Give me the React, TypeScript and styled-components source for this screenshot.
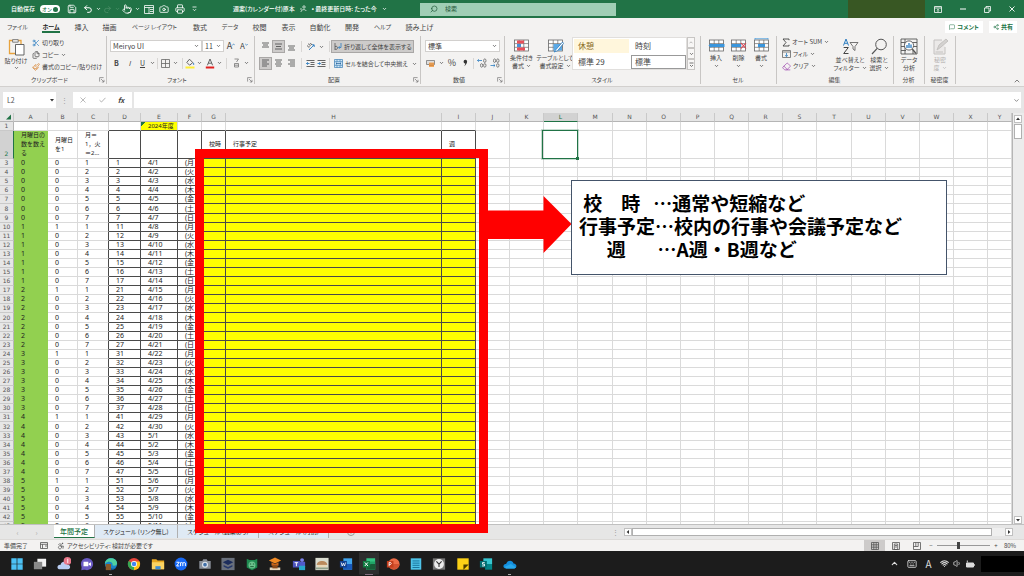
import React from "react";
import styled, { createGlobalStyle, css } from "styled-components";
import { Undo2, Redo2, Save, Camera, Printer, Search, Pointer, Scissors, Files, Paintbrush, Eraser, Wifi, Volume1, Accessibility, MessageSquare, Share2, ChevronUp, ChevronDown, Keyboard } from "lucide-react";

const Global = createGlobalStyle`
  * { box-sizing: border-box; }
  body {
    margin: 0;
    background: #e6e6e6;
    color: #444;
    font-family: "Noto Sans CJK JP", "Liberation Sans", sans-serif;
    font-size: 7px;
    line-height: 8px;
  }
  button, input, select { font: inherit; color: inherit; margin: 0; padding: 0; border: 0; background: none; outline: none; }
  button { display: inline-flex; align-items: center; justify-content: center; white-space: nowrap; }
  svg { display: block; flex: none; }
`;

/* ---------- shared parts ---------- */
const Page = styled.div`
  display: flex;
  flex-direction: column;
  height: 100vh;
  overflow: hidden;
`;

const Spacer = styled.div`
  flex: 1;
`;

const Caret = ({ c = "#555" }: { c?: string }) => (
  <svg width="5" height="4" viewBox="0 0 5 4">
    <path d="M1 1.1 L2.5 2.6 L4 1.1" fill="none" stroke={c} strokeWidth="0.8" />
  </svg>
);

/* ---------- title bar ---------- */
const TitleBar = styled.header`
  display: flex;
  align-items: center;
  height: 18px;
  flex: none;
  background: #217346;
  color: #fff;
`;

const AutoSave = styled.label`
  display: flex;
  align-items: center;
  gap: 5px;
  padding-left: 11px;
  font-size: 6px;
  font-weight: 500;
  width: 63px;
  white-space: nowrap;
`;

const Toggle = styled.input`
  appearance: none;
  display: flex;
  align-items: center;
  justify-content: space-between;
  width: 20px;
  height: 8px;
  padding: 0 2px;
  border-radius: 4px;
  background: #fff;
  color: #217346;
  font-size: 5px;
  &::before { content: "オン"; }
  &::after { content: ""; width: 5px; height: 5px; border-radius: 50%; background: #217346; }
`;

const Slot = styled.button<{ $w: number; $h?: number; $on?: boolean; $size?: number; $end?: boolean }>`
  width: ${(p) => p.$w}px;
  height: ${(p) => p.$h ?? 12}px;
  flex: none;
  ${(p) => p.$size && css`font-size: ${p.$size}px;`}
  ${(p) => p.$end && css`align-self: flex-end;`}
  ${(p) => p.$on && css`background: #cdcbca; border: 1px solid #a9a7a6;`}
`;

const DocTitle = styled.div`
  display: flex;
  align-items: center;
  gap: 5px;
  margin-left: 31px;
  width: 187px;
  font-size: 6px;
  font-weight: 500;
  white-space: nowrap;
  font-feature-settings: "palt";
`;

const SearchBox = styled.label`
  display: flex;
  align-items: center;
  gap: 7px;
  width: 196px;
  height: 13px;
  padding-left: 10px;
  background: #a0ceb5;
  color: #1d5535;
  font-size: 6px;
  input { flex: 1; min-width: 0; }
  input::placeholder { color: #1d5535; opacity: 1; }
`;

const NamePlate = styled.div`
  width: 77px;
  height: 18px;
  background: #385723;
`;

/* ---------- ribbon tabs ---------- */
const TabRow = styled.nav`
  display: flex;
  align-items: center;
  height: 18px;
  flex: none;
  padding: 0 7px 0 1px;
  background: #f3f2f1;
`;

const RibbonTab = styled.a<{ $w: number; $active?: boolean; $kana?: boolean }>`
  display: flex;
  align-items: center;
  justify-content: center;
  width: ${(p) => p.$w}px;
  height: 16px;
  color: #444;
  font-size: ${(p) => (p.$kana ? 6 : 7)}px;
  font-feature-settings: "palt";
  text-decoration: none;
  white-space: nowrap;
  ${(p) => p.$active && css`
    color: #222;
    font-weight: 700;
    span { border-bottom: 2px solid #217346; padding-top: 2px; }
  `}
`;

const ShareButton = styled.button`
  gap: 2px;
  height: 12px;
  padding: 0 4px;
  margin-left: 6px;
  background: #fff;
  color: #217346;
  font-size: 6px;
  font-weight: 700;
  font-feature-settings: "palt";
`;

/* ---------- ribbon ---------- */
const Ribbon = styled.section`
  display: flex;
  height: 51px;
  flex: none;
  background: #f3f2f1;
  border-bottom: 1px solid #d2d0ce;
`;

const Group = styled.div<{ $w: number }>`
  display: flex;
  flex-direction: column;
  width: ${(p) => p.$w}px;
  flex: none;
  height: 48px;
  border-right: 1px solid #c8c6c4;
`;

const GroupBody = styled.div<{ $pad?: number }>`
  display: flex;
  flex: 1;
  min-height: 0;
  padding-left: ${(p) => p.$pad ?? 0}px;
`;

const GroupLabel = styled.div`
  display: flex;
  align-items: center;
  justify-content: center;
  height: 8px;
  padding-right: 1px;
  font-size: 6px;
  font-feature-settings: "palt";
  span { flex: 1; text-align: center; }
`;

const Column = styled.div<{ $gap?: number; $pad?: number }>`
  display: flex;
  flex-direction: column;
  gap: ${(p) => p.$gap ?? 0}px;
  padding-top: ${(p) => p.$pad ?? 0}px;
`;

const Row = styled.div`
  display: flex;
  align-items: center;
`;

const BigButton = styled.button<{ $w: number; $dim?: boolean }>`
  flex-direction: column;
  justify-content: flex-start;
  width: ${(p) => p.$w}px;
  height: 36px;
  padding-top: 2px;
  font-size: 6px;
  font-feature-settings: "palt";
  color: ${(p) => (p.$dim ? "#b5b3b1" : "#444")};
  svg:first-child { margin-bottom: 1px; }
`;

const CaptionRow = styled.span`
  display: flex;
  align-items: center;
  gap: 2px;
  height: 8px;
`;

const LineButton = styled.button`
  justify-content: flex-start;
  gap: 2px;
  height: 12px;
  font-size: 6px;
  font-feature-settings: "palt";
`;

const Picker = styled.div<{ $w: number }>`
  display: flex;
  align-items: center;
  width: ${(p) => p.$w}px;
  height: 12px;
  padding: 0 2px;
  background: #fff;
  border: 1px solid #d2d0ce;
  select { appearance: none; flex: 1; min-width: 0; }
`;

const Divider = styled.i<{ $m?: number }>`
  width: 1px;
  height: 11px;
  margin: 0 ${(p) => p.$m ?? 2}px;
  background: #d8d6d4;
`;

const TextButton = styled.button<{ $on?: boolean }>`
  gap: 2px;
  width: 83px;
  height: 13px;
  padding: 0 2px;
  justify-content: flex-start;
  font-size: 6px;
  font-feature-settings: "palt";
  border: 1px solid transparent;
  ${(p) => p.$on && css`background: #cdcbca; border-color: #a9a7a6;`}
`;

const Gallery = styled.div`
  display: grid;
  grid-template-columns: 57px 57px;
  grid-template-rows: 16px 16px;
  width: 115px;
  height: 33px;
  margin-top: 1px;
  background: #fff;
  border: 1px solid #e1dfdd;
`;

const StyleCell = styled.button<{ $tint?: boolean; $on?: boolean }>`
  justify-content: flex-start;
  padding-left: 4px;
  margin: 1px;
  font-size: 8px;
  ${(p) => p.$tint && css`background: #fff6dc; color: #8a6d1f;`}
  ${(p) => p.$on && css`border: 1px solid #999; padding-left: 3px;`}
`;

const GalleryScroll = styled.div`
  display: flex;
  flex-direction: column;
  width: 8px;
  height: 33px;
  margin-top: 1px;
  button { flex: 1; border: 1px solid #c8c6c4; background: #f8f7f6; }
`;

/* ---------- formula bar ---------- */
const FormulaRow = styled.div`
  display: flex;
  align-items: center;
  height: 26px;
  flex: none;
  padding: 0 3px;
  background: #e6e6e6;
`;

const White = styled.div<{ $w?: number }>`
  display: flex;
  align-items: center;
  height: 16px;
  background: #fff;
  ${(p) => (p.$w ? css`width: ${p.$w}px;` : css`flex: 1; margin-left: 2px;`)}
  input { flex: 1; min-width: 0; padding-left: 4px; color: #555; }
`;

const Dots = styled.span`
  width: 17px;
  text-align: center;
  color: #999;
`;

/* ---------- sheet ---------- */
const Work = styled.main`
  position: relative;
  display: flex;
  flex-direction: column;
  flex: 1;
  min-height: 0;
`;

const SheetArea = styled.div`
  display: flex;
  flex: 1;
  min-height: 0;
`;

const SheetView = styled.div`
  flex: 1;
  min-width: 0;
  overflow: hidden;
  background: #fff;
`;

const Table = styled.table`
  table-layout: fixed;
  width: 100%;
  border-collapse: separate;
  border-spacing: 0;
  th, td {
    height: 9px;
    padding: 0;
    line-height: 8px;
    overflow: hidden;
    white-space: nowrap;
    border-right: 1px solid #dadada;
    border-bottom: 1px solid #dadada;
  }
  tbody tr:nth-child(12n + 8) td { height: 10px; }
`;

const HeadCell = styled.th<{ $on?: boolean }>`
  background: ${(p) => (p.$on ? "#d2d2d2" : "#e6e6e6")};
  color: ${(p) => (p.$on ? "#217346" : "#555")};
  font: 400 6px/8px "DejaVu Sans", sans-serif;
  && { border-right-color: #c9c9c9; border-bottom-color: ${(p) => (p.$on ? "#217346" : "#b5b5b5")}; }
`;

const RowHead = styled.th<{ $on?: boolean }>`
  background: ${(p) => (p.$on ? "#d2d2d2" : "#e6e6e6")};
  color: ${(p) => (p.$on ? "#217346" : "#555")};
  font: 400 6px/8px "DejaVu Sans", sans-serif;
  vertical-align: bottom;
  && { border-right-color: ${(p) => (p.$on ? "#217346" : "#b5b5b5")}; border-bottom-color: #c9c9c9; }
`;

const Cell = styled.td<{ $fill?: string; $ruleR?: boolean; $ruleB?: boolean }>`
  color: #222;
  font-family: "Noto Sans", "Noto Sans CJK JP", sans-serif;
  ${(p) => p.$fill && css`background: ${p.$fill};`}
  ${(p) => p.$fill === "#92d050" && css`&& { border-color: #92d050; }`}
  && {
    padding-left: 7px;
    ${(p) => p.$ruleR && css`border-right-color: #4a4a4a;`}
    ${(p) => p.$ruleB && css`border-bottom-color: #4a4a4a;`}
  }
`;

const TitleCell = styled(Cell)`
  && {
    height: 27px;
    white-space: pre;
    font-size: 6px;
    line-height: 9px;
  }
`;

const YearCell = styled(Cell)`
  font-size: 6px;
  background: linear-gradient(135deg, #217346 3px, #ffff00 3px);
`;

const SelectedCell = styled.td`
  position: relative;
  && { overflow: visible; }
  &::before {
    content: "";
    position: absolute;
    inset: -1px;
    border: 1px solid #217346;
    left: -2px;
    outline: 1px solid rgba(33, 115, 70, 0.25);
  }
  &::after {
    content: "";
    position: absolute;
    right: -2px;
    bottom: -2px;
    width: 3px;
    height: 3px;
    background: #217346;
  }
`;

const VScroll = styled.div`
  display: flex;
  flex-direction: column;
  align-items: center;
  justify-content: space-between;
  width: 12px;
  padding: 1px 2px 0 1px;
  background: #ececec;
  border-left: 1px solid #b5b5b5;
`;

const ScrollButton = styled.button`
  width: 8px;
  height: 8px;
  background: #fff;
  border: 1px solid #c0c0c0;
`;

const VThumb = styled.div`
  width: 8px;
  height: 15px;
  margin-top: 1px;
  background: #fff;
  border: 1px solid #b0b0b0;
`;

const BottomRow = styled.div`
  display: flex;
  align-items: center;
  height: 15px;
  flex: none;
  padding-right: 11px;
  background: #e6e6e6;
  border-top: 1px solid #c0c0c0;
`;

const SheetNav = styled.div`
  display: flex;
  justify-content: space-around;
  width: 54px;
  padding: 0 8px;
  color: #aaa;
`;

const SheetTab = styled.button<{ $w: number; $active?: boolean }>`
  align-self: flex-start;
  width: ${(p) => p.$w}px;
  height: 13px;
  background: #dfeaf5;
  color: #222;
  border-right: 1px solid #b0b0b0;
  font-size: 6px;
  font-feature-settings: "palt";
  ${(p) => p.$active && css`background: #fff; color: #217346; font-size: 7px; font-weight: 500; border-bottom: 1px solid #217346;`}
`;

const AddSheet = styled.button`
  width: 8px;
  height: 8px;
  margin-left: 18px;
  border: 1px solid #999;
  border-radius: 50%;
  color: #777;
`;

const HScroll = styled.div`
  display: flex;
  align-items: center;
  width: 389px;
  background: #efefef;
`;

const HThumb = styled.div`
  width: 360px;
  height: 8px;
  background: #fff;
  border: 1px solid #b0b0b0;
`;

/* ---------- annotation drawn over the sheet ---------- */
const RedFrame = styled.div`
  position: absolute;
  left: 195px;
  top: 36px;
  width: 293px;
  height: 384px;
  border: 9px solid #ff0000;
`;

const Arrow = styled.svg`
  position: absolute;
  left: 487px;
  top: 83px;
`;

const Note = styled.div`
  position: absolute;
  left: 571px;
  top: 67px;
  width: 376px;
  height: 95px;
  padding: 10px 7px;
  background: #fff;
  border: 1px solid #44546a;
  color: #000;
  font-size: 19px;
  font-weight: 700;
  line-height: 23px;
  white-space: pre;
  p { margin: 0; }
`;

/* ---------- status bar ---------- */
const StatusBar = styled.footer`
  display: flex;
  align-items: center;
  height: 12px;
  flex: none;
  padding: 0 4px;
  background: #f3f2f1;
  border-top: 1px solid #dcdad8;
  font-size: 6px;
  color: #444;
  font-feature-settings: "palt";
`;

const StatusText = styled.span<{ $w: number }>`
  width: ${(p) => p.$w}px;
  white-space: nowrap;
`;

const ViewButton = styled.button<{ $on?: boolean }>`
  width: 21px;
  height: 12px;
  background: ${(p) => (p.$on ? "#cdcbca" : "none")};
`;

const Zoom = styled.input`
  appearance: none;
  width: 53px;
  height: 8px;
  margin: 0 2px;
  background: linear-gradient(#999, #999) center / 100% 1px no-repeat;
  &::-webkit-slider-thumb { appearance: none; width: 3px; height: 7px; background: #444; }
`;

/* ---------- task bar ---------- */
const TaskBar = styled.div`
  display: flex;
  align-items: center;
  height: 25px;
  flex: none;
  background: #1c1c1c;
  color: #ddd;
`;

const Apps = styled.div`
  display: flex;
  align-items: center;
  justify-content: space-between;
  width: 507px;
  margin-left: 10px;
`;

const AppButton = styled.button<{ $open?: boolean; $front?: boolean }>`
  position: relative;
  width: 14px;
  height: 22px;
  ${(p) => p.$front && css`background: #2e2e2e; box-shadow: 0 0 0 3px #2e2e2e; clip-path: inset(0 -4px);`}
  ${(p) => p.$open && css`
    &::after {
      content: "";
      position: absolute;
      bottom: 0;
      width: ${p.$front ? 8 : 3}px;
      height: 1px;
      background: ${p.$front ? "#e2b3d8" : "#aaa"};
    }
  `}
`;

const Tray = styled.div`
  display: flex;
  align-items: center;
`;

const Clock = styled.div`
  width: 43px;
  height: 16px;
  background: #000;
  margin-left: 5px;
`;

/* ---------- icons ---------- */
const LinesIcon = ({ rows }: { rows: [number, number, number][] }) => (
  <svg width="9" height="9" viewBox="0 0 9 9" stroke="#555" strokeWidth="0.9">
    {rows.map(([y, a, b], i) => <path key={i} d={`M${a} ${y}H${b}`} />)}
  </svg>
);

const GridIcon = ({ kind }: { kind: "cond" | "table" | "insert" | "delete" | "format" }) => (
  <svg width="17" height="15" viewBox="0 0 17 15" fill="none">
    <rect x="1.5" y="2" width="14" height="11" fill="#fff" stroke="#666" strokeWidth="0.8" />
    <path d="M1.5 5.6H15.5M1.5 9.3H15.5M6.2 2V13M10.8 2V13" stroke="#666" strokeWidth="0.7" />
    {kind === "cond" && <><path d="M4 2.5H11V5.4H4zM4 9.5H12V12.6H4z" fill="#e8505b" /><path d="M4 6H8V9H4z" fill="#4a90d9" /></>}
    {kind === "table" && <><path d="M6.5 6H15V12.6H6.5z" fill="#5aa9e6" /><path d="M15.5 4L9 11.5L7 14L10.5 12.8L16.5 5.5z" fill="#fff" stroke="#2b7cc0" strokeWidth="0.8" /></>}
    {kind === "insert" && <path d="M0.5 7.4L3.2 5V6H16.5V9H3.2V10z" fill="#3a96dd" />}
    {kind === "delete" && <><path d="M1.5 6H11V9H1.5z" fill="#3a96dd" /><path d="M11 5L16 10.5M16 5L11 10.5" stroke="#e04050" strokeWidth="1.1" /></>}
    {kind === "format" && <><path d="M5 6H12V9H5z" fill="#3a96dd" /><path d="M2 0.7H15M2 0V1.5M15 0V1.5" stroke="#3a96dd" strokeWidth="0.7" /></>}
  </svg>
);

const PasteIcon = () => (
  <svg width="17" height="18" viewBox="0 0 17 18" fill="none">
    <path d="M5 2.5H1.5V15.5H7M10 2.5H13V6" stroke="#e8a33d" strokeWidth="1.3" />
    <path d="M4.6 1.6H10.2V4.2H4.6z" fill="#eee" stroke="#666" strokeWidth="0.8" />
    <path d="M7.5 6.5H16V17H7.5z" fill="#fff" stroke="#555" strokeWidth="0.9" />
  </svg>
);

const SortIcon = () => (
  <svg width="17" height="17" viewBox="0 0 17 17" fill="none" strokeWidth="1">
    <path d="M1.5 7.5L4 1L6.5 7.5M2.4 5.3H5.6" stroke="#2b7cc0" />
    <path d="M1.7 9.5H6.3L1.7 15.5H6.5" stroke="#444" />
    <path d="M8 4.5H16L13 8.5V12.5L11 11V8.5z" stroke="#555" strokeWidth="0.8" />
  </svg>
);

const FindIcon = () => (
  <svg width="17" height="17" viewBox="0 0 17 17" fill="none" stroke="#555">
    <circle cx="10" cy="6.5" r="5.3" />
    <path d="M6.2 10.3L1 16" strokeWidth="1.2" />
  </svg>
);

const AnalyzeIcon = () => (
  <svg width="18" height="17" viewBox="0 0 18 17" fill="none" stroke="#555" strokeWidth="0.9">
    <path d="M1 1H17V16H1zM1 4.5H17M1 8.5H5M13 8.5H17M1 12.5H6M5 1V16M13 12V16" />
    <circle cx="9" cy="7.5" r="4.6" fill="#fff" />
    <path d="M7 10V7M9 10V5M11 10V6.5" stroke="#2b7cc0" strokeWidth="1.3" />
    <path d="M12.3 11L16 15.5" strokeWidth="1.3" />
  </svg>
);

const SensitivityIcon = () => (
  <svg width="17" height="17" viewBox="0 0 17 17" fill="none" stroke="#c4c2c0">
    <path d="M10 2H2V16H13V9" fill="#ebe9e8" />
    <path d="M5 12L7 7L14 1L16 3L9 9z" fill="#d4d2d0" />
    <path d="M3.5 14H11" />
  </svg>
);

const MergeIcon = () => (
  <svg width="9" height="9" viewBox="0 0 9 9" fill="none">
    <path d="M0.5 0.5H8.5V8.5H0.5zM0.5 2.7H8.5M0.5 6.3H8.5M3 0.5V2.7M6 0.5V2.7M3 6.3V8.5M6 6.3V8.5" fill="#cfe6f7" stroke="#3d7fb5" strokeWidth="0.7" />
    <path d="M2 4.5H7M3 3.6L2 4.5L3 5.4M6 3.6L7 4.5L6 5.4" stroke="#1f5f99" strokeWidth="0.7" />
  </svg>
);

const WrapIcon = () => (
  <svg width="8" height="9" viewBox="0 0 8 9" fill="none" strokeWidth="0.8">
    <path d="M1 1V8M1 4.6C3 3.6 3.6 5 3.4 6.4C3 7.6 2 7.6 1 7" stroke="#555" />
    <path d="M7 1V5.5H4.6M5.6 4.2L4.4 5.5L5.6 6.8" stroke="#2b7cc0" />
  </svg>
);

const IndentIcon = ({ flip }: { flip?: boolean }) => (
  <svg width="9" height="9" viewBox="0 0 9 9" strokeWidth="0.9" fill="none">
    <path d="M0.5 1.5H8.5M4.5 3.5H8.5M4.5 5.5H8.5M0.5 7.5H8.5" stroke="#555" />
    <path d={flip ? "M0.5 4.5H3.5M2.3 3.2L3.6 4.5L2.3 5.8" : "M0.5 4.5H3.5M1.8 3.2L0.5 4.5L1.8 5.8"} stroke="#2b7cc0" />
  </svg>
);

const OrientIcon = () => (
  <svg width="9" height="9" viewBox="0 0 9 9" fill="none" strokeWidth="0.9">
    <path d="M1 3.5L3.4 5.8M2 2.2C3.5 1.5 5 3.5 3.5 4.6M4.3 1L6 3" stroke="#555" />
    <path d="M3 8L8 3M6 2.8H8.2V5" stroke="#2b7cc0" />
  </svg>
);

const BordersIcon = () => (
  <svg width="9" height="9" viewBox="0 0 9 9" fill="none" stroke="#666" strokeWidth="0.8">
    <path d="M0.5 0.5H8.5V8.5H0.5zM4.5 0.5V8.5M0.5 4.5H8.5" />
  </svg>
);

const FillIcon = () => (
  <svg width="10" height="11" viewBox="0 0 10 11" fill="none">
    <path d="M4.5 1.2L7.8 4.6L4.6 7.2L1.8 4.4z" stroke="#555" strokeWidth="0.9" />
    <path d="M8.6 4.5C9.6 6 9.4 6.8 8.6 6.8C7.9 6.8 7.8 6 8.6 4.5" fill="#2b7cc0" />
    <path d="M0.5 8.5H9.5V10.5H0.5z" fill="#ffee33" />
  </svg>
);

const FontColorIcon = () => (
  <svg width="10" height="11" viewBox="0 0 10 11" fill="none">
    <path d="M2.4 7.3L5 1L7.6 7.3M3.3 5.2H6.7" stroke="#555" strokeWidth="0.9" />
    <path d="M0.8 8.5H9.2V10.5H0.8z" fill="#e02020" />
  </svg>
);

const PhoneticIcon = () => (
  <svg width="7" height="10" viewBox="0 0 7 10" fill="none" stroke="#777" strokeWidth="0.8">
    <path d="M1.5 1H5.5L3.5 4M1.5 5.5H5.5V9H1.5zM1.5 7.2H5.5" />
  </svg>
);

const MoneyIcon = () => (
  <svg width="10" height="9" viewBox="0 0 10 9" fill="none">
    <path d="M0.5 1.5H8.5V5.5H0.5z" stroke="#777" strokeWidth="0.8" fill="#ddd" />
    <path d="M3 3.5H8V8H3z" fill="#f0a860" />
    <path d="M3 5H8M3 6.5H8" stroke="#c87830" strokeWidth="0.6" />
  </svg>
);

const DecimalIcon = ({ less }: { less?: boolean }) => (
  <svg width="10" height="10" viewBox="0 0 10 10" fill="none" strokeWidth="0.8">
    <ellipse cx="7.8" cy="2.7" rx="1.2" ry="1.8" stroke="#666" />
    <ellipse cx="7.8" cy="7.4" rx="1.2" ry="1.8" stroke="#666" />
    <ellipse cx="4.6" cy={less ? 2.7 : 7.4} rx="1.1" ry="1.8" stroke="#666" />
    <path d={less ? "M0.5 7.5H5M3.6 6.2L5 7.5L3.6 8.8" : "M0.5 2.5H5M1.8 1.2L0.5 2.5L1.8 3.8"} stroke="#2b7cc0" />
  </svg>
);

const Launcher = () => (
  <svg width="6" height="6" viewBox="0 0 6 6" fill="none" stroke="#777" strokeWidth="0.7">
    <path d="M0.6 4.6V0.6H4.6M2 2L5 5M5 2.8V5H2.8" />
  </svg>
);

const Tri = ({ d }: { d: string }) => (
  <svg width="4" height="4" viewBox="0 0 4 4"><path d={d} fill="#333" /></svg>
);

const taskIcons: { name: string; open?: boolean; front?: boolean; art: React.ReactNode }[] = [
  { name: "スタート", art: <path d="M1.5 1.5H7.6V7.6H1.5zM8.4 1.5H14.5V7.6H8.4zM1.5 8.4H7.6V14.5H1.5zM8.4 8.4H14.5V14.5H8.4z" fill="#4cc2f5" /> },
  { name: "タスク ビュー", art: <><path d="M5 2H15V11H5z" fill="#f2f2f2" /><path d="M1 5.5H10.5V14H1z" fill="#8a8a8a" /></> },
  { name: "天気", art: <><path d="M3.5 14C-1 14 0 8.5 4 9C5 4.5 10.5 4.5 11.5 8.5C16 8.5 16 14 12.5 14z" fill="#b9cdf2" /><circle cx="12" cy="4.5" r="4.4" fill="#e8788a" /><path d="M12.3 2V7" stroke="#fff" /></> },
  { name: "チャット", art: <><circle cx="8" cy="8" r="7" fill="#6a5bc4" /><path d="M2 10L1.5 15L7 14z" fill="#6a5bc4" /><path d="M4 5.5H9.5V10.5H4zM10 7.5L12.5 6V10.2L10 8.8z" fill="#fff" /></> },
  { name: "Edge", open: true, art: <><circle cx="8" cy="8" r="7" fill="#1b82c8" /><path d="M1 8C1 0 14 -1 15 7C15 10 10.5 10.5 9.6 9.2C11 6 5 3.5 1 8z" fill="#4fd0a0" /><path d="M6 8C5 13 10 14.5 13.5 12.5C10 16.5 2 15 2.5 9z" fill="#0c4f8c" /><path d="M2 8H8V15H2z" fill="#8a5a2a" /></> },
  { name: "Chrome", art: <><circle cx="8" cy="8" r="7" fill="#e8453c" /><path d="M8 8L1.9 4.5A7 7 0 0 0 8 15z" fill="#34a853" /><path d="M8 8H8V15A7 7 0 0 0 14.3 5H8z" fill="#fbc116" /><circle cx="8" cy="8" r="3.4" fill="#fff" /><circle cx="8" cy="8" r="2.6" fill="#4285f4" /></> },
  { name: "エクスプローラー", art: <><path d="M1 2.5H6L7.5 4H15V14H1z" fill="#e8a820" /><path d="M1 6H15V14H1z" fill="#fcd462" /><path d="M5 10.5H11V14H5z" fill="#3f8fd4" /></> },
  { name: "Zoom", art: <><circle cx="8" cy="8" r="7.3" fill="#1769f5" /><path d="M2.8 6H6L3 10.2H6M7.5 10.4V6.2M7.5 7Q9 5.4 10.1 7V10.4M10.1 7Q11.8 5.4 13 7V10.4" stroke="#fff" fill="none" strokeWidth="1.1" /></> },
  { name: "カメラ", art: <><path d="M1.5 4.5H5L6 2.5H10L11 4.5H14.5V13.5H1.5z" fill="#8b929c" /><circle cx="8" cy="8.8" r="3.4" fill="#dfe6ee" /><circle cx="8" cy="8.8" r="2.1" fill="#4070a8" /></> },
  { name: "学習", art: <><path d="M0.5 1H15.5V15H0.5z" fill="#69707c" /><path d="M8 3L14 6L8 9L2 6z" fill="#1c2d5c" /><path d="M3 9L8 11.5L13 9V11L8 13.5L3 11z" fill="#27396b" /></> },
  { name: "教室", art: <><path d="M2 2L5 3.5H11L14 2V12L8 15L2 12z" fill="#1f8a50" /><circle cx="8" cy="9" r="4" fill="#6bc28d" /><path d="M5.5 8H7M9 8H10.5M6 11H10" stroke="#14532d" /></> },
  { name: "校務", art: <><path d="M8 0.5L15 4L8 7.5L1 4z" fill="#f08a24" /><path d="M4 6V10H12V6L8 8z" fill="#c8641a" /><path d="M2 12H14V15H2z" fill="#e8d8c0" /><path d="M5 10H11V13H5z" fill="#8a4a1a" /></> },
  { name: "Teams", art: <><circle cx="11.5" cy="3.5" r="2.2" fill="#7b83eb" /><path d="M7 5.5H15V11Q14 14.5 10 14z" fill="#5059c9" /><path d="M1 4.5H9V12H1z" fill="#4b53bc" /><path d="M3 6.5H7M5 6.5V10.5" stroke="#fff" strokeWidth="1.1" /><path d="M8 10H15V15H8z" fill="#27a6c8" /></> },
  { name: "写真", art: <><path d="M0.5 1H15.5V15H0.5z" fill="#d9dccf" /><path d="M2 9C2 3 14 3 14 9z" fill="#b98a5c" /><path d="M3 9H13V12H3z" fill="#e8d8b8" /><path d="M1 12H15V14H1z" fill="#8fa08a" /></> },
  { name: "Word", art: <><path d="M5 1.5H15V14.5H5z" fill="#41a5ee" /><path d="M5 8H15V14.5H5z" fill="#185abd" /><path d="M1 4.5H9V12H1z" fill="#103f91" /><path d="M2.5 6.3L3.7 10.3L5 7L6.3 10.3L7.5 6.3" stroke="#fff" fill="none" strokeWidth="0.9" /></> },
  { name: "Excel", open: true, front: true, art: <><path d="M5 1.5H15V14.5H5z" fill="#33c481" /><path d="M5 5H15V14.5H5z" fill="#21a366" /><path d="M10 8H15V14.5H5V12z" fill="#185c37" /><path d="M1 4.5H9V12H1z" fill="#107c41" /><path d="M3.2 6.2L6.8 10.3M6.8 6.2L3.2 10.3" stroke="#fff" strokeWidth="1.1" /></> },
  { name: "PowerPoint", art: <><circle cx="9" cy="8" r="6.5" fill="#ed6c47" /><path d="M9 8H15.5A6.5 6.5 0 0 1 3 10z" fill="#d35230" /><path d="M1 4.5H8.5V12H1z" fill="#c43e1c" /><path d="M3.6 10.5V6.2H5.2Q6.8 7.4 5.2 8.6H3.6" stroke="#fff" fill="none" /></> },
  { name: "メモ帳", art: <><path d="M2 1.5H14V14.5H2z" fill="#4ec3e8" /><path d="M4 4.5H12M4 7H12M4 9.5H12M4 12H12" stroke="#136a92" /></> },
  { name: "時計", art: <><path d="M1 1.5H15V14.5H1z" fill="#777" /><circle cx="8" cy="8" r="5.6" fill="#eee" /><path d="M5 5L8 8.2L11 5M8 8V11.5" stroke="#333" fill="none" strokeWidth="1.2" /></> },
  { name: "付箋", art: <><path d="M1.5 1.5H14.5V14.5H1.5z" fill="#fcd116" /><path d="M8.5 8.5H14.5L8.5 14.5z" fill="#4a3b00" /></> },
  { name: "Sway", art: <><path d="M5 1.5H15V8H5z" fill="#37c6d0" /><path d="M7 8H15V14.5H7z" fill="#038387" /><path d="M1 4.5H9V12H1z" fill="#036c70" /><path d="M6.5 6.4H4V8.2H6.3V10.2H3.5" stroke="#fff" fill="none" /></> },
  { name: "OneDrive", open: true, art: <><path d="M3.5 13C-1 13 0 7.5 3.5 8C5 3 11 3 12 7.3C16.5 7.5 16 13 13 13z" fill="#1490df" /><path d="M2 11L9 8L15 12L13 13H3.5z" fill="#28a8ea" /></> },
];

/* ---------- data ---------- */
const tabs: { t: string; w: number; kana?: boolean; active?: boolean }[] = [
  { t: "ファイル", w: 33, kana: true }, { t: "ホーム", w: 34, kana: true, active: true }, { t: "挿入", w: 27 }, { t: "描画", w: 29 },
  { t: "ページ レイアウト", w: 61, kana: true }, { t: "数式", w: 30 }, { t: "データ", w: 30, kana: true }, { t: "校閲", w: 29 },
  { t: "表示", w: 29 }, { t: "自動化", w: 34 }, { t: "開発", w: 30 }, { t: "ヘルプ", w: 31, kana: true }, { t: "読み上げ", w: 43 },
];

const letters = "ABCDEFGHIJKLMNOPQRSTUVWXY".split("");
const colWidths = [34, 30, 31, 32, 37, 24, 24, 216, 34, 34, 34, 34, 35, 34, 34, 34, 34, 34, 34, 35, 34, 34, 34, 34];
const days = ["月", "火", "水", "木", "金", "土", "日"];
const records = Array.from({ length: 41 }, (_, i) => {
  const week = Math.floor(i / 7);
  const day = (i % 7) + 1;
  return {
    row: i + 3,
    week,
    monday: day === 1 && i > 0 ? 1 : 0,
    day,
    code: week * 10 + day,
    date: i < 30 ? `4/${i + 1}` : `5/${i - 29}`,
    label: `(${days[day - 1]}`,
  };
});
const tail = letters.slice(9);
const GREEN = "#92d050";
const YELLOW = "#ffff00";

const Big = ({ w, icon, lines, caret = true, dim }: { w: number; icon: React.ReactNode; lines: string[]; caret?: boolean; dim?: boolean }) => (
  <BigButton $w={w} $dim={dim}>
    {icon}
    {lines.map((l, i) => (
      <CaptionRow key={i}>{l}{caret && i === 1 && <Caret c={dim ? "#bbb" : "#555"} />}</CaptionRow>
    ))}
  </BigButton>
);

const Sheet = () => (
  <Table>
    <colgroup>
      <col style={{ width: 14 }} />
      {letters.map((l, i) => <col key={l} style={{ width: colWidths[i] }} />)}
    </colgroup>
    <thead>
      <tr>
        <HeadCell aria-label="すべて選択"><svg width="13" height="8" viewBox="0 0 13 8"><path d="M11 1.5V6.5H6z" fill="#217346" /></svg></HeadCell>
        {letters.map((l) => <HeadCell key={l} $on={l === "L"}>{l}</HeadCell>)}
      </tr>
    </thead>
    <tbody>
      <tr>
        <RowHead>1</RowHead>
        <Cell /><Cell /><Cell />
        <Cell $ruleB />
        <YearCell $ruleB>2024年度</YearCell>
        <Cell $ruleB /><Cell $ruleB /><Cell $ruleB /><Cell $ruleB />
        {tail.map((l) => <Cell key={l} />)}
      </tr>
      <tr>
        <RowHead $on>2</RowHead>
        <TitleCell $fill={GREEN}>{"月曜日の\n数を数え\nる"}</TitleCell>
        <TitleCell>{"月曜日\nを1"}</TitleCell>
        <TitleCell $ruleR>{"月＝\n1，火\n＝2…"}</TitleCell>
        <TitleCell $ruleR $ruleB />
        <TitleCell $ruleR $ruleB />
        <TitleCell $ruleR $ruleB />
        <TitleCell $ruleR $ruleB>校時</TitleCell>
        <TitleCell $ruleR $ruleB>行事予定</TitleCell>
        <TitleCell $ruleR $ruleB>週</TitleCell>
        {tail.map((l) => (l === "L" ? <SelectedCell key={l} /> : <Cell key={l} />))}
      </tr>
      {records.map((r) => (
        <tr key={r.row}>
          <RowHead>{r.row}</RowHead>
          <Cell $fill={GREEN}>{r.week}</Cell>
          <Cell>{r.monday}</Cell>
          <Cell $ruleR>{r.day}</Cell>
          <Cell $ruleR $ruleB>{r.code}</Cell>
          <Cell $ruleR $ruleB>{r.date}</Cell>
          <Cell $ruleR $ruleB>{r.label}</Cell>
          <Cell $ruleR $ruleB $fill={YELLOW} />
          <Cell $ruleR $ruleB $fill={YELLOW} />
          <Cell $ruleR $ruleB $fill={YELLOW} />
          {tail.map((l) => <Cell key={l} />)}
        </tr>
      ))}
    </tbody>
  </Table>
);

export default function App() {
  return (
    <Page lang="ja">
      <Global />
      <TitleBar>
        <AutoSave>自動保存<Toggle type="checkbox" defaultChecked /></AutoSave>
        <Slot $w={18} aria-label="保存"><Save size={10} strokeWidth={2} /></Slot>
        <Slot $w={13} aria-label="元に戻す"><Undo2 size={10} strokeWidth={2.4} /></Slot>
        <Slot $w={8} aria-label="元に戻す一覧"><Caret c="#fff" /></Slot>
        <Slot $w={11} aria-label="やり直し"><Redo2 size={9} color="#4d9069" /></Slot>
        <Slot $w={8} aria-label="やり直し一覧"><Caret c="#4d9069" /></Slot>
        <Slot $w={12} aria-label="タッチ"><Pointer size={10} /></Slot>
        <Slot $w={8} aria-label="タッチ一覧"><Caret c="#fff" /></Slot>
        <Slot $w={15} aria-label="表"><svg width="10" height="9" viewBox="0 0 10 9" fill="none" stroke="#fff" strokeWidth="0.8"><path d="M0.5 0.5H9.5V8.5H0.5zM0.5 2.5H9.5M5 2.5V8.5M6 4.5H9M6 6.5H9" /></svg></Slot>
        <Slot $w={16} aria-label="カメラ"><Camera size={10} /></Slot>
        <Slot $w={15} aria-label="印刷"><Printer size={10} /></Slot>
        <Slot $w={15} aria-label="クイック アクセス"><svg width="5" height="6" viewBox="0 0 5 6" fill="none" stroke="#fff" strokeWidth="0.8"><path d="M0.5 1H4.5M1 3.2L2.5 4.7L4 3.2" /></svg></Slot>
        <DocTitle>
          週案(カレンダー付)原本
          <svg width="7" height="8" viewBox="0 0 7 8" fill="none" stroke="#fff" strokeWidth="0.7"><circle cx="4" cy="2" r="1.2" /><path d="M1 7C1 4 6 4 6 6M1 3V5" /></svg>
          • 最終更新日時: たった今
          <Caret c="#fff" />
        </DocTitle>
        <SearchBox><Search size={8} transform="scale(-1 1)" /><input placeholder="検索" aria-label="検索" /></SearchBox>
        <Spacer />
        <NamePlate />
        <Slot $w={26} aria-label="リボンの表示"><svg width="8" height="7" viewBox="0 0 8 7" fill="none" stroke="#fff" strokeWidth="0.8"><path d="M0.5 0.5H7.5V6.5H0.5zM0.5 2H7.5M4 6V3.4M3 4.3L4 3.3L5 4.3" /></svg></Slot>
        <Slot $w={24} aria-label="最小化"><svg width="6" height="6" viewBox="0 0 6 6"><path d="M0 3H6" stroke="#fff" /></svg></Slot>
        <Slot $w={25} aria-label="元に戻す(縮小)"><svg width="7" height="7" viewBox="0 0 7 7" fill="none" stroke="#fff" strokeWidth="0.8"><path d="M0.5 2H5V6.5H0.5zM2 2V0.5H6.5V5H5" /></svg></Slot>
        <Slot $w={24} aria-label="閉じる"><svg width="6" height="6" viewBox="0 0 6 6"><path d="M0.5 0.5L5.5 5.5M5.5 0.5L0.5 5.5" stroke="#fff" strokeWidth="0.9" /></svg></Slot>
      </TitleBar>

      <TabRow>
        {tabs.map((t) => <RibbonTab key={t.t} href="#" $w={t.w} $kana={t.kana} $active={t.active}><span>{t.t}</span></RibbonTab>)}
        <Spacer />
        <ShareButton><MessageSquare size={6} />コメント</ShareButton>
        <ShareButton><Share2 size={6} />共有</ShareButton>
      </TabRow>

      <Ribbon>
        <Group $w={107}>
          <GroupBody>
            <Big w={32} icon={<PasteIcon />} lines={["貼り付け", ""]} />
            <Column $pad={1}>
              <LineButton><Scissors size={8} color="#2b7cc0" />切り取り</LineButton>
              <LineButton><Files size={8} />コピー<Caret /></LineButton>
              <LineButton><Paintbrush size={8} color="#d8802a" />書式のコピー/貼り付け</LineButton>
            </Column>
          </GroupBody>
          <GroupLabel><span>クリップボード</span><Launcher /></GroupLabel>
        </Group>

        <Group $w={148}>
          <GroupBody $pad={3}>
            <Column $gap={5} $pad={4}>
              <Row>
                <Picker $w={92}><select aria-label="フォント"><option>Meiryo UI</option></select><Caret /></Picker>
                <Picker $w={22}><select aria-label="フォント サイズ"><option>11</option></select><Caret /></Picker>
                <Slot $w={14} $size={9}>A<svg width="3" height="7" viewBox="0 0 3 7"><path d="M0.3 2.2L1.5 1L2.7 2.2" fill="none" stroke="#2b7cc0" strokeWidth="0.8" /></svg></Slot>
                <Slot $w={12} $size={8}>A<svg width="3" height="7" viewBox="0 0 3 7"><path d="M0.3 1L1.5 2.2L2.7 1" fill="none" stroke="#2b7cc0" strokeWidth="0.8" /></svg></Slot>
              </Row>
              <Row>
                <Slot $w={13}><b>B</b></Slot>
                <Slot $w={13}><i>I</i></Slot>
                <Slot $w={13}><u>U</u></Slot>
                <Slot $w={6} aria-label="下線"><Caret /></Slot>
                <Divider />
                <Slot $w={10} aria-label="罫線"><BordersIcon /></Slot>
                <Slot $w={10} aria-label="罫線一覧"><Caret /></Slot>
                <Divider />
                <Slot $w={10} aria-label="塗りつぶし"><FillIcon /></Slot>
                <Slot $w={9} aria-label="塗りつぶし一覧"><Caret /></Slot>
                <Slot $w={11} aria-label="文字の色"><FontColorIcon /></Slot>
                <Slot $w={9} aria-label="文字の色一覧"><Caret /></Slot>
                <Divider />
                <Slot $w={14} aria-label="ふりがな"><PhoneticIcon /></Slot>
                <Slot $w={7} aria-label="ふりがな一覧"><Caret /></Slot>
              </Row>
            </Column>
          </GroupBody>
          <GroupLabel><span>フォント</span><Launcher /></GroupLabel>
        </Group>

        <Group $w={166}>
          <GroupBody $pad={4}>
            <Column $gap={4} $pad={4}>
              <Row>
                <Slot $w={13} $h={13} aria-label="上揃え"><LinesIcon rows={[[1, 1, 8], [3, 2, 7], [5, 1, 8]]} /></Slot>
                <Slot $w={13} $h={13} $on aria-label="上下中央揃え"><LinesIcon rows={[[2, 1, 8], [4.5, 2, 7], [7, 1, 8]]} /></Slot>
                <Slot $w={13} $h={13} aria-label="下揃え"><LinesIcon rows={[[4, 1, 8], [6, 2, 7], [8, 1, 8]]} /></Slot>
                <Divider $m={3} />
                <Slot $w={10} $h={13} aria-label="方向"><OrientIcon /></Slot>
                <Slot $w={13} $h={13} aria-label="方向一覧"><Caret /></Slot>
                <Divider $m={1} />
                <TextButton $on><WrapIcon />折り返して全体を表示する</TextButton>
              </Row>
              <Row>
                <Slot $w={13} $h={13} $on aria-label="左揃え"><LinesIcon rows={[[1, 1, 8], [3, 1, 6], [5, 1, 8], [7, 1, 6]]} /></Slot>
                <Slot $w={13} $h={13} aria-label="中央揃え"><LinesIcon rows={[[1, 1, 8], [3, 2, 7], [5, 1, 8], [7, 2, 7]]} /></Slot>
                <Slot $w={13} $h={13} aria-label="右揃え"><LinesIcon rows={[[1, 1, 8], [3, 3, 8], [5, 1, 8], [7, 3, 8]]} /></Slot>
                <Divider $m={3} />
                <Slot $w={10} $h={13} aria-label="インデントを減らす"><IndentIcon /></Slot>
                <Slot $w={13} $h={13} aria-label="インデントを増やす"><IndentIcon flip /></Slot>
                <Divider $m={1} />
                <TextButton><MergeIcon />セルを結合して中央揃え<Spacer /><Caret /></TextButton>
              </Row>
            </Column>
          </GroupBody>
          <GroupLabel><span>配置</span><Launcher /></GroupLabel>
        </Group>

        <Group $w={84}>
          <GroupBody $pad={4}>
            <Column $gap={5} $pad={4}>
              <Picker $w={75}><select aria-label="表示形式"><option>標準</option></select><Caret /></Picker>
              <Row>
                <Slot $w={12} aria-label="通貨"><MoneyIcon /></Slot>
                <Slot $w={8} aria-label="通貨一覧"><Caret /></Slot>
                <Slot $w={14} $size={9}>%</Slot>
                <Slot $w={12} aria-label="桁区切り"><svg width="5" height="8" viewBox="0 0 5 8"><path d="M2.3 0.8C4.8 0.6 5 4.5 1.2 7.2C2 5.8 2.4 5 2.2 4.4C0 4.2 0.2 1 2.3 0.8z" fill="#333" /></svg></Slot>
                <Divider />
                <Slot $w={12} aria-label="小数点以下を増やす"><DecimalIcon /></Slot>
                <Slot $w={13} aria-label="小数点以下を減らす"><DecimalIcon less /></Slot>
              </Row>
            </Column>
          </GroupBody>
          <GroupLabel><span>数値</span><Launcher /></GroupLabel>
        </Group>

        <Group $w={196}>
          <GroupBody>
            <Big w={33} icon={<GridIcon kind="cond" />} lines={["条件付き", "書式"]} />
            <Big w={34} icon={<GridIcon kind="table" />} lines={["テーブルとして", "書式設定"]} />
            <Gallery>
              <StyleCell $tint>休憩</StyleCell><StyleCell>時刻</StyleCell>
              <StyleCell>標準 29</StyleCell><StyleCell $on>標準</StyleCell>
            </Gallery>
            <GalleryScroll>
              <button aria-label="上へ"><svg width="4" height="3" viewBox="0 0 4 3"><path d="M0.5 2.3L2 0.8L3.5 2.3" fill="none" stroke="#aaa" strokeWidth="0.8" /></svg></button>
              <button aria-label="下へ"><Caret /></button>
              <button aria-label="その他"><svg width="5" height="6" viewBox="0 0 5 6" fill="none" stroke="#555" strokeWidth="0.8"><path d="M0.5 1H4.5M1 3L2.5 4.5L4 3" /></svg></button>
            </GalleryScroll>
          </GroupBody>
          <GroupLabel><span>スタイル</span></GroupLabel>
        </Group>

        <Group $w={76}>
          <GroupBody $pad={4}>
            <Big w={22} icon={<GridIcon kind="insert" />} lines={["挿入", ""]} />
            <Big w={23} icon={<GridIcon kind="delete" />} lines={["削除", ""]} />
            <Big w={22} icon={<GridIcon kind="format" />} lines={["書式", ""]} />
          </GroupBody>
          <GroupLabel><span>セル</span></GroupLabel>
        </Group>

        <Group $w={117}>
          <GroupBody $pad={5}>
            <Column>
              <LineButton><svg width="8" height="9" viewBox="0 0 8 9"><path d="M7 2.2V1H1L4 4.5L1 8H7V6.8" fill="none" stroke="#444" strokeWidth="0.9" /></svg>オート SUM<Caret /></LineButton>
              <LineButton><svg width="9" height="8" viewBox="0 0 9 8" fill="none" stroke="#666" strokeWidth="0.8"><path d="M0.5 0.5H8.5V7.5H0.5zM0.5 2H8.5" /><path d="M4.5 3V6.5M3 5.2L4.5 6.6L6 5.2" stroke="#2b7cc0" /></svg>フィル<Caret /></LineButton>
              <LineButton><Eraser size={9} color="#a04cb0" />クリア<Caret /></LineButton>
            </Column>
            <Spacer />
            <Big w={30} icon={<SortIcon />} lines={["並べ替えと", "フィルター"]} />
            <Big w={28} icon={<FindIcon />} lines={["検索と", "選択"]} />
          </GroupBody>
          <GroupLabel><span>編集</span></GroupLabel>
        </Group>

        <Group $w={31}>
          <GroupBody><Big w={30} icon={<AnalyzeIcon />} lines={["データ", "分析"]} caret={false} /></GroupBody>
          <GroupLabel><span>分析</span></GroupLabel>
        </Group>

        <Group $w={31}>
          <GroupBody><Big w={30} dim icon={<SensitivityIcon />} lines={["秘密", "度"]} /></GroupBody>
          <GroupLabel><span>秘密度</span></GroupLabel>
        </Group>
        <Spacer />
        <Slot $w={14} $h={10} $end aria-label="リボンを折りたたむ"><ChevronUp size={8} /></Slot>
      </Ribbon>

      <FormulaRow>
        <White $w={53}><input aria-label="名前ボックス" defaultValue="L2" /><Slot $w={8} aria-label="名前一覧"><Tri d="M0 1H4L2 3.4z" /></Slot></White>
        <Dots>⋮</Dots>
        <White $w={59}>
          <Slot $w={20} aria-label="キャンセル"><svg width="6" height="6" viewBox="0 0 6 6"><path d="M0.5 0.5L5.5 5.5M5.5 0.5L0.5 5.5" stroke="#aaa" strokeWidth="0.8" /></svg></Slot>
          <Slot $w={19} aria-label="入力"><svg width="7" height="6" viewBox="0 0 7 6"><path d="M0.5 3.2L2.5 5L6.5 0.8" stroke="#aaa" fill="none" strokeWidth="0.9" /></svg></Slot>
          <Slot $w={18}><b><i>fx</i></b></Slot>
        </White>
        <White><input aria-label="数式バー" /><Slot $w={9} aria-label="数式バーの展開"><ChevronDown size={7} /></Slot></White>
      </FormulaRow>

      <Work>
        <SheetArea>
          <SheetView><Sheet /></SheetView>
          <VScroll>
            <div>
              <ScrollButton aria-label="上へスクロール"><Tri d="M0 3H4L2 0.6z" /></ScrollButton>
              <VThumb />
            </div>
            <ScrollButton aria-label="下へスクロール"><Tri d="M0 1H4L2 3.4z" /></ScrollButton>
          </VScroll>
        </SheetArea>
        <BottomRow>
          <SheetNav><span>‹</span><span>›</span></SheetNav>
          <SheetTab $w={41} $active>年間予定</SheetTab>
          <SheetTab $w={83}>スケジュール (リンク無し)</SheetTab>
          <SheetTab $w={81}>スケジュール (週案あり)</SheetTab>
          <SheetTab $w={70}>スケジュール (月別)</SheetTab>
          <AddSheet aria-label="新しいシート">+</AddSheet>
          <Spacer />
          <Dots>⋮</Dots>
          <HScroll>
            <ScrollButton aria-label="左へスクロール"><Tri d="M3 0V4L0.6 2z" /></ScrollButton>
            <HThumb />
            <Spacer />
            <ScrollButton aria-label="右へスクロール"><Tri d="M1 0V4L3.4 2z" /></ScrollButton>
          </HScroll>
        </BottomRow>
        <RedFrame />
        <Arrow width="85" height="57" viewBox="0 0 85 57"><path d="M0 14.5H56.5V0L84.5 28L56.5 57V43H0z" fill="#ff0000" /></Arrow>
        <Note>
          <p>{" 校　時   …通常や短縮など"}</p>
          <p>行事予定…校内の行事や会議予定など</p>
          <p>{"　  週　   …A週・B週など"}</p>
        </Note>
      </Work>

      <StatusBar>
        <StatusText $w={36}>準備完了</StatusText>
        <StatusText $w={17}><svg width="8" height="7" viewBox="0 0 8 7" fill="none" stroke="#555" strokeWidth="0.8"><path d="M0.5 0.5H7.5V6.5H0.5zM0.5 2.3H7.5M2.5 2.3V6.5M5 4H7" /></svg></StatusText>
        <StatusText $w={10}><Accessibility size={8} /></StatusText>
        <StatusText $w={90}>アクセシビリティ: 検討が必要です</StatusText>
        <Spacer />
        <ViewButton $on aria-label="標準"><svg width="8" height="8" viewBox="0 0 8 8" fill="none" stroke="#555" strokeWidth="0.8"><path d="M0.5 0.5H7.5V7.5H0.5zM0.5 2.8H7.5M0.5 5.2H7.5M2.8 0.5V7.5M5.2 0.5V7.5" /></svg></ViewButton>
        <ViewButton aria-label="ページ レイアウト"><svg width="8" height="8" viewBox="0 0 8 8" fill="none" stroke="#555" strokeWidth="0.8"><path d="M0.5 0.5H7.5V7.5H0.5zM2.3 2H5.7V7.5H2.3zM3 3.5H5M3 5H5" /></svg></ViewButton>
        <ViewButton aria-label="改ページ プレビュー"><svg width="8" height="8" viewBox="0 0 8 8" fill="none" stroke="#555" strokeWidth="0.8"><path d="M0.5 0.5H7.5V7.5H0.5zM2.8 0.5V4.5M5.2 0.5V4.5H0.5" /></svg></ViewButton>
        <Slot $w={8} $h={10}>−</Slot>
        <Zoom type="range" min={0} max={100} defaultValue={39} aria-label="ズーム" />
        <Slot $w={8} $h={10}>+</Slot>
        <Slot $w={20} $h={10}>80%</Slot>
      </StatusBar>

      <TaskBar>
        <Apps>
          {taskIcons.map((t) => (
            <AppButton key={t.name} aria-label={t.name} $open={t.open} $front={t.front}>
              <svg width="14" height="14" viewBox="0 0 16 16" fill="none">{t.art}</svg>
            </AppButton>
          ))}
        </Apps>
        <Spacer />
        <Tray>
          <Slot $w={17} aria-label="隠れているアイコン"><ChevronUp size={9} strokeWidth={3} /></Slot>
          <Slot $w={17} aria-label="キーボード"><Keyboard size={10} /></Slot>
          <Slot $w={17} $size={10}>A</Slot>
          <Slot $w={15} aria-label="Wi-Fi"><Wifi size={9} strokeWidth={3} /></Slot>
          <Slot $w={11} aria-label="音量"><Volume1 size={9} /></Slot>
          <Slot $w={13} aria-label="バッテリー"><svg width="10" height="8" viewBox="0 0 10 8" fill="none"><path d="M1.5 3H8.5V7H1.5z" fill="#ddd" stroke="#ddd" /><path d="M9.5 4.3V5.7M2.3 0.5V2.5" stroke="#ddd" /></svg></Slot>
        </Tray>
        <Clock />
      </TaskBar>
    </Page>
  );
}
